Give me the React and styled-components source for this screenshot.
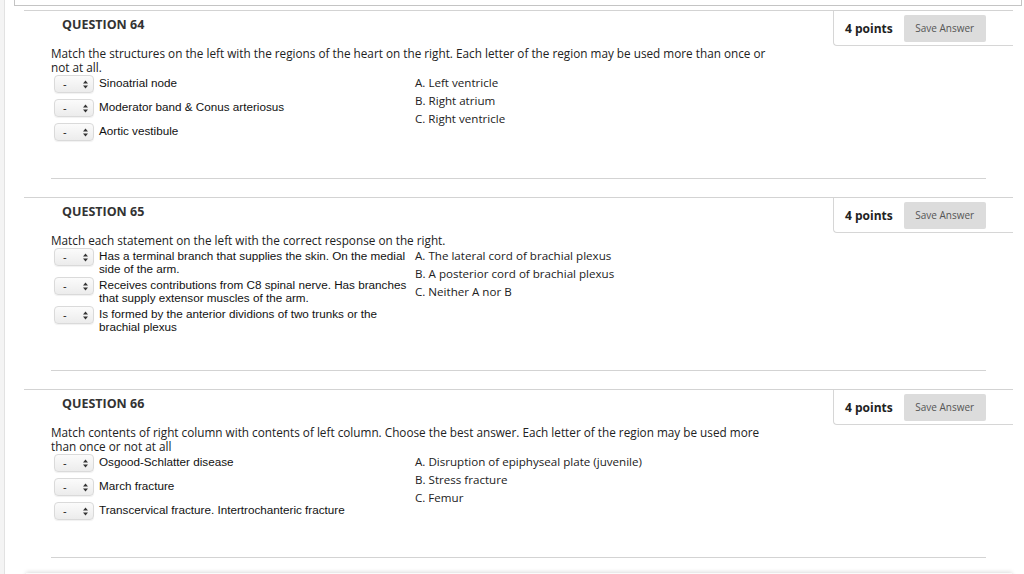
import React from "react";
import styled, { createGlobalStyle } from "styled-components";

const GlobalStyle = createGlobalStyle`
  html, body {
    margin: 0;
    padding: 0;
    background: #fff;
    height: 574px;
    overflow: hidden;
  }
  body {
    font-family: "Open Sans", "Liberation Sans", sans-serif;
    color: #222;
  }
`;

const questions = [
  {
    num: 64,
    text:
      "Match the structures on the left with the regions of the heart on the right. Each letter of the region may be used more than once or not at all.",
    items: [
      "Sinoatrial node",
      "Moderator band & Conus arteriosus",
      "Aortic vestibule",
    ],
    answers: ["A. Left ventricle", "B. Right atrium", "C. Right ventricle"],
    space: 32,
  },
  {
    num: 65,
    text: "Match each statement on the left with the correct response on the right.",
    items: [
      "Has a terminal branch that supplies the skin. On the medial side of the arm.",
      "Receives contributions from C8 spinal nerve. Has branches that supply extensor muscles of the arm.",
      "Is formed by the anterior dividions of two trunks or the brachial plexus",
    ],
    answers: [
      "A. The lateral cord of brachial plexus",
      "B. A posterior cord of brachial plexus",
      "C. Neither A nor B",
    ],
    space: 36,
  },
  {
    num: 66,
    text:
      "Match contents of right column with contents of left column. Choose the best answer. Each letter of the region may be used more than once or not at all",
    items: [
      "Osgood-Schlatter disease",
      "March fracture",
      "Transcervical fracture. Intertrochanteric fracture",
    ],
    answers: [
      "A. Disruption of epiphyseal plate (juvenile)",
      "B. Stress fracture",
      "C. Femur",
    ],
    space: 32,
  },
];

const Page = styled.div`
  display: flex;
  height: 574px;
  overflow: hidden;
`;

const SideRail = styled.div`
  width: 4px;
  flex: none;
  background: #f4f4f4;
  border-right: 1px solid #e2e2e2;
`;

const Main = styled.div`
  flex: 1;
  display: flex;
  flex-direction: column;
  & > * {
    flex-shrink: 0;
  }
`;

const PrevBox = styled.div`
  height: 5px;
  margin: 0 2px 0 9px;
  border: 1px solid #c4c4c4;
  border-top: none;
`;

const List = styled.div`
  margin: 4px 0 0 19px;
  width: 989px;
  display: flex;
  flex-direction: column;
  gap: 18px;
`;

const Block = styled.section`
  border-top: 1px solid #d3d3d3;
`;

const Header = styled.div`
  display: flex;
  justify-content: space-between;
  align-items: flex-start;
`;

const Title = styled.h3`
  margin: 0;
  padding: 5px 0 0 38px;
  font-size: 12.5px;
  font-weight: 700;
  color: #333;
  line-height: 18px;
`;

const Points = styled.div`
  width: 180px;
  height: 35px;
  box-sizing: border-box;
  border-left: 1px solid #d6d6d6;
  border-bottom: 1px solid #d6d6d6;
  border-bottom-left-radius: 4px;
  display: flex;
  align-items: center;
  padding-left: 11px;
  gap: 11px;
`;

const PointsLabel = styled.span`
  font-size: 12px;
  font-weight: 700;
  color: #222;
`;

const SaveButton = styled.button`
  width: 82px;
  height: 27px;
  border: none;
  border-radius: 2px;
  background: #dcdcdc;
  color: #555;
  font-family: "Open Sans", sans-serif;
  font-size: 10px;
  padding: 0;
`;

const Body = styled.div`
  margin: 0 27px;
  padding: 0 0 ${(p) => p.$space}px;
  border-bottom: 1px solid #d3d3d3;
`;

const Prompt = styled.p`
  margin: 0;
  max-width: 722px;
  font-size: 11.75px;
  line-height: 14px;
  color: #222;
`;

const Match = styled.div`
  display: flex;
  align-items: flex-start;
`;

const Items = styled.div`
  width: 360px;
  padding-left: 3px;
  flex: none;
`;

const Row = styled.div`
  display: flex;
  align-items: flex-start;
  min-height: 24px;
  padding: 1px 0;
  box-sizing: border-box;
`;

const Select = styled.div`
  width: 40px;
  height: 18px;
  flex: none;
  box-sizing: border-box;
  border: 1px solid #dadada;
  border-radius: 4px;
  background: linear-gradient(#fbfbfb, #ececec);
  box-shadow: 0 1px 1px rgba(0, 0, 0, 0.06);
  display: flex;
  align-items: center;
  justify-content: space-between;
  padding: 0 5px 0 8px;
  font-family: "Liberation Sans", Arial, sans-serif;
  font-size: 11px;
  color: #222;
  margin-right: 5px;
`;

const Label = styled.div`
  padding-top: 2px;
  font-family: "Liberation Sans", Arial, sans-serif;
  font-size: 11.7px;
  line-height: 12.5px;
  color: #111;
`;

const Answers = styled.ol`
  list-style: none;
  margin: 0;
  padding: 0 0 0 1px;
`;

const Answer = styled.li`
  font-size: 11.6px;
  line-height: 18px;
  color: #222;
`;

const Footer = styled.div`
  margin: 15px 0 0 21px;
  width: 986px;
  height: 10px;
  background: #fbfbfb;
  box-shadow: 0 -1px 4px rgba(0, 0, 0, 0.14);
`;

const Arrows = () => (
  <svg width="5" height="9" viewBox="0 0 5 9">
    <path d="M2.5 0.5 L5 3.6 L0 3.6 Z" fill="#333" />
    <path d="M2.5 8.5 L5 5.4 L0 5.4 Z" fill="#333" />
  </svg>
);

const App = () => {
  return (
    <Page>
      <GlobalStyle />
      <SideRail />
      <Main>
        <PrevBox />
        <List>
          {questions.map((q) => (
            <Block key={q.num}>
              <Header>
                <Title>QUESTION {q.num}</Title>
                <Points>
                  <PointsLabel>4 points</PointsLabel>
                  <SaveButton>Save Answer</SaveButton>
                </Points>
              </Header>
              <Body $space={q.space}>
                <Prompt>{q.text}</Prompt>
                <Match>
                  <Items>
                    {q.items.map((item) => (
                      <Row key={item}>
                        <Select>
                          <span>-</span>
                          <Arrows />
                        </Select>
                        <Label>{item}</Label>
                      </Row>
                    ))}
                  </Items>
                  <Answers>
                    {q.answers.map((a) => (
                      <Answer key={a}>{a}</Answer>
                    ))}
                  </Answers>
                </Match>
              </Body>
            </Block>
          ))}
        </List>
        <Footer />
      </Main>
    </Page>
  );
};

export default App;
